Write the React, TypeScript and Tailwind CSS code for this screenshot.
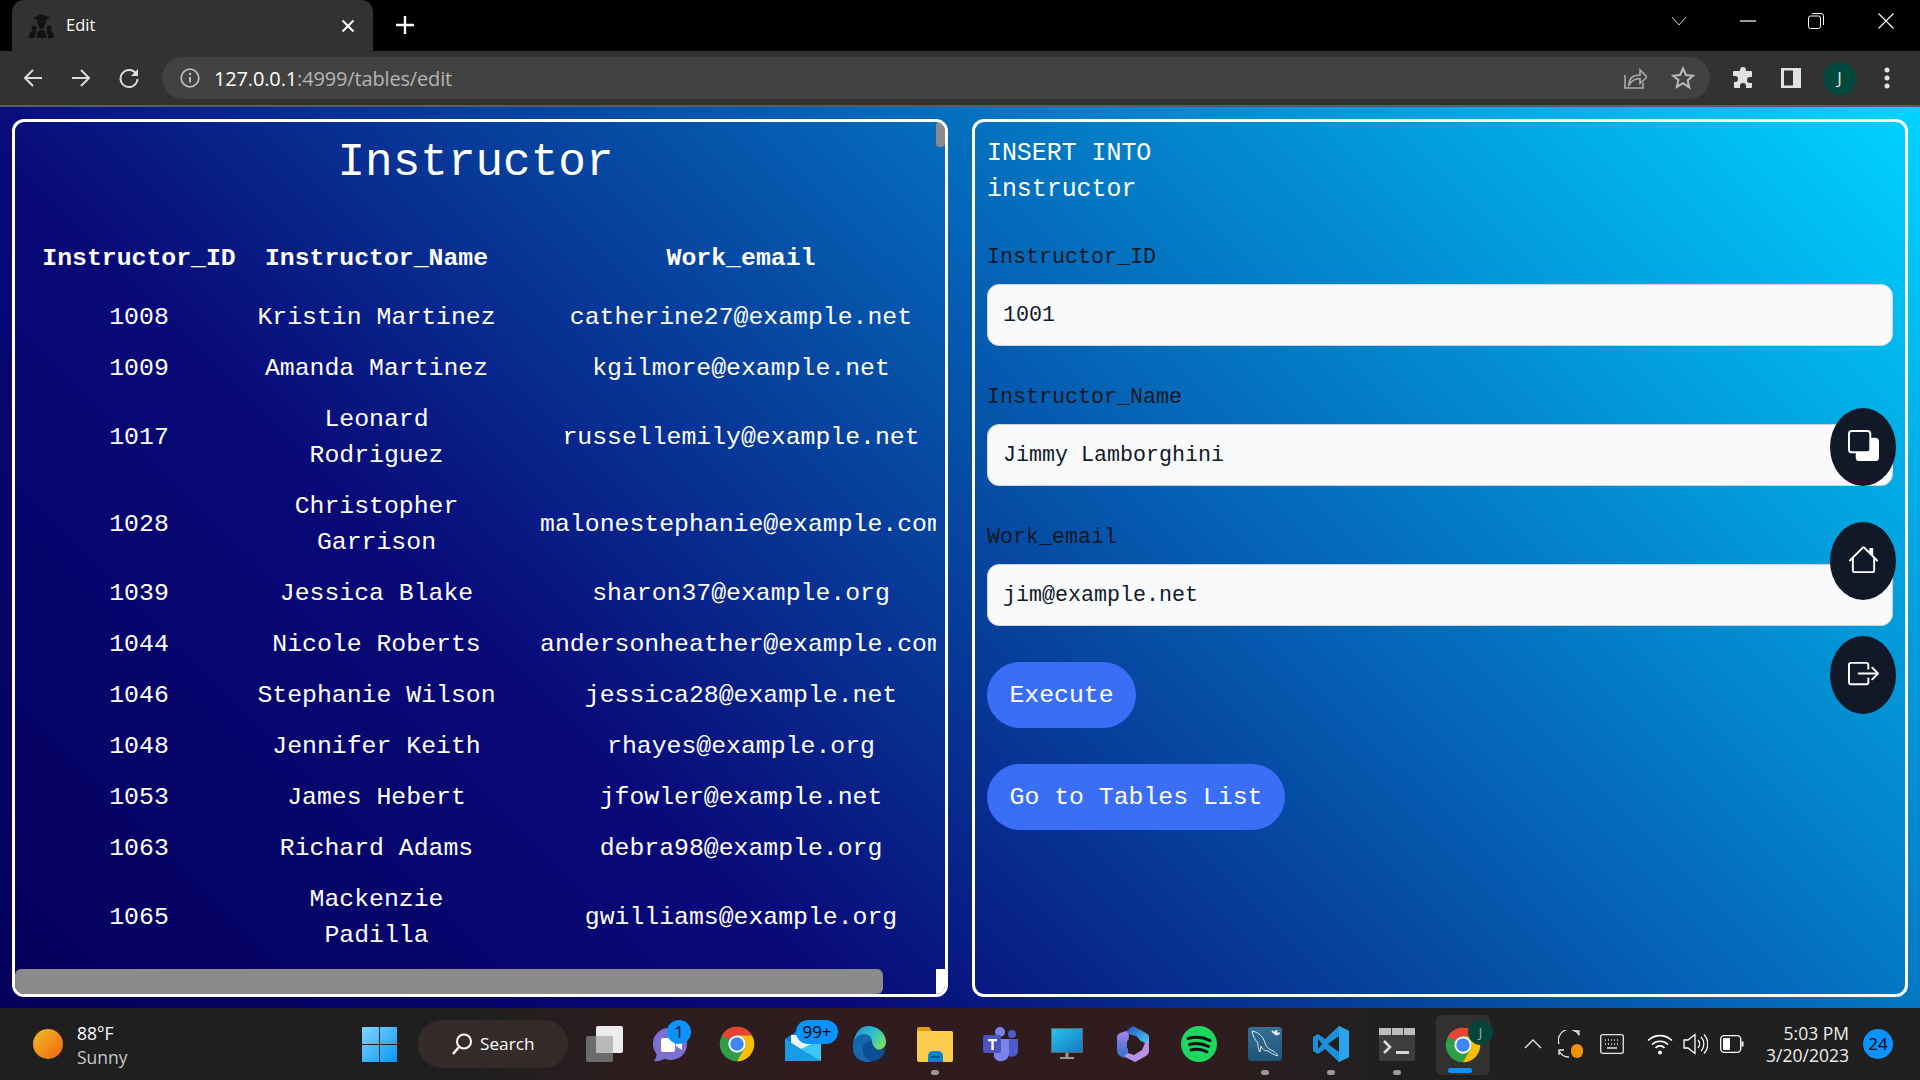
import React from "react";
import { BsBack, BsHouse, BsBoxArrowRight } from "react-icons/bs";

const rows: [string, string[], string][] = [
  ["1008", ["Kristin Martinez"], "catherine27@example.net"],
  ["1009", ["Amanda Martinez"], "kgilmore@example.net"],
  ["1017", ["Leonard", "Rodriguez"], "russellemily@example.net"],
  ["1028", ["Christopher", "Garrison"], "malonestephanie@example.com"],
  ["1039", ["Jessica Blake"], "sharon37@example.org"],
  ["1044", ["Nicole Roberts"], "andersonheather@example.com"],
  ["1046", ["Stephanie Wilson"], "jessica28@example.net"],
  ["1048", ["Jennifer Keith"], "rhayes@example.org"],
  ["1053", ["James Hebert"], "jfowler@example.net"],
  ["1063", ["Richard Adams"], "debra98@example.org"],
  ["1065", ["Mackenzie", "Padilla"], "gwilliams@example.org"],
];

const ui = "font-['Open_Sans','Noto_Sans',sans-serif]";

function ChromeLogo({ size = 36 }: { size?: number }) {
  return (
    <svg width={size} height={size} viewBox="0 0 48 48">
      <circle cx="24" cy="24" r="23" fill="#2e9e48" />
      <path d="M24 1a23 23 0 0 1 19.9 11.5H24a11.5 11.5 0 0 0-10 5.800L4.100 12.500A23 23 0 0 1 24 1z" fill="#ea4335" />
      <path d="M43.900 12.500A23 23 0 0 1 24 47l10-17.200a11.500 11.500 0 0 0 0-11.500L24 12.500z" fill="#fbbc04" />
      <circle cx="24" cy="24" r="11.500" fill="#fff" />
      <circle cx="24" cy="24" r="9" fill="#4285f4" />
    </svg>
  );
}

function Slot({ children, dot }: { children?: React.ReactNode; dot?: boolean }) {
  return (
    <div className="relative w-[66px] h-[72px] flex items-center justify-center shrink-0">
      {children}
      {dot && <div className="absolute left-[29px] bottom-[5px] w-[8px] h-[5px] rounded-full bg-[#9a9a9a]" />}
    </div>
  );
}

function Badge({ text, className }: { text: string; className: string }) {
  return (
    <div className={`absolute rounded-full bg-[#0a93ff] text-black flex items-center justify-center text-[17px] ${ui} ${className}`}>
      {text}
    </div>
  );
}

export default function App() {
  return (
    <div className="w-[1920px] h-[1080px] flex flex-col overflow-hidden bg-black">
      {/* Tab strip */}
      <div className={`h-[51px] shrink-0 bg-black flex items-end relative ${ui}`}>
        <div className="ml-[12px] w-[361px] h-[51px] bg-[#323232] rounded-t-[12px] flex items-center pl-[17px] pr-[18px] text-white">
          <svg width="25" height="25" viewBox="0 0 25 25" className="shrink-0">
            <path d="M12.500 1 21 5l-8.500 4L4 5z" fill="#111" />
            <path d="M8 7.500v2.500a4.500 2.500 0 0 0 9 0V7.500l-4.500 2z" fill="#111" />
            <circle cx="12.500" cy="13.500" r="2.600" fill="#111" />
            <circle cx="5" cy="15" r="2.500" fill="#111" />
            <circle cx="20" cy="15" r="2.500" fill="#111" />
            <path d="M0 25c0-5 2-7.500 5-7.500 1.500 0 2 .5 2.500 1-1 1.500-1.500 4-1.500 6.500zM7.500 25c0-5 2-8 5-8s5 3 5 8zM19 25c0-2.500-.5-5-1.500-6.500.5-.5 1-1 2.500-1 3 0 5 2.500 5 7.500z" fill="#111" />
          </svg>
          <span className="ml-[12px] text-[16.500px] text-white">Edit</span>
          <svg width="14" height="14" viewBox="0 0 14 14" className="ml-auto">
            <path d="M1.500 1.500l11 11M12.500 1.500l-11 11" stroke="#fff" strokeWidth="2" />
          </svg>
        </div>
        <svg width="20" height="20" viewBox="0 0 20 20" className="ml-[22px] mb-[16px]">
          <path d="M10 1v18M1 10h18" stroke="#fff" strokeWidth="2.400" />
        </svg>
        <div className="ml-auto flex items-center h-[51px] pb-[9px] mr-[26px]">
          <svg width="16" height="10" viewBox="0 0 16 10" className="mr-[53px]">
            <path d="M1 1l7 8 7-8" stroke="#ccc" fill="none" />
          </svg>
          <svg width="16" height="2" viewBox="0 0 16 2" className="mr-[52px]">
            <path d="M0 1h16" stroke="#fff" strokeWidth="1.200" />
          </svg>
          <svg width="16" height="16" viewBox="0 0 16 16" className="mr-[54px]">
            <rect x=".5" y="3" width="12" height="12.500" rx="2" stroke="#fff" fill="none" />
            <path d="M4 .6h9.500a2 2 0 0 1 2 2V12" stroke="#fff" fill="none" />
          </svg>
          <svg width="16" height="16" viewBox="0 0 16 16">
            <path d="M.5.5l15 15M15.500.5l-15 15" stroke="#fff" strokeWidth="1.100" />
          </svg>
        </div>
      </div>

      {/* Toolbar */}
      <div className={`h-[56px] shrink-0 bg-[#323232] border-b-2 border-[#5c5c5c] flex items-center ${ui}`}>
        <div className="flex items-center h-[54px] w-full">
          <svg width="22" height="22" viewBox="0 0 22 22" className="ml-[22px]">
            <path d="M20 11H3M11 3l-8 8 8 8" stroke="#ddd" strokeWidth="2" fill="none" />
          </svg>
          <svg width="22" height="22" viewBox="0 0 22 22" className="ml-[26px]">
            <path d="M2 11h17M11 3l8 8-8 8" stroke="#ddd" strokeWidth="2" fill="none" />
          </svg>
          <svg width="22" height="22" viewBox="0 0 22 22" className="ml-[26px]">
            <path d="M18.500 7.500A8.500 8.500 0 1 0 19.500 12" stroke="#ddd" strokeWidth="2" fill="none" />
            <path d="M20 2v7h-7z" fill="#ddd" />
          </svg>
          <div className="ml-[22px] w-[1548px] h-[42px] rounded-full bg-[#424242] flex items-center">
            <svg width="20" height="20" viewBox="0 0 20 20" className="ml-[18px]">
              <circle cx="10" cy="10" r="8.800" stroke="#bbb" strokeWidth="1.800" fill="none" />
              <path d="M10 9v5.500" stroke="#bbb" strokeWidth="2" />
              <circle cx="10" cy="6" r="1.200" fill="#bbb" />
            </svg>
            <span className="ml-[14px] pt-[1px] text-[20px] tracking-[-0.15px] text-white">
              127.0.0.1<span className="text-[#b4b4b4]">:4999/tables/edit</span>
            </span>
            <svg width="24" height="24" viewBox="0 0 24 24" className="ml-auto">
              <path d="M2 9v13h18v-5" stroke="#aaa" strokeWidth="1.600" fill="none" />
              <path d="M6 19c0-7 4-10 11-10V4l7 7-7 6.500v-5c-5 0-8 1.500-11 6.500z" stroke="#aaa" strokeWidth="1.600" fill="none" />
            </svg>
            <svg width="24" height="24" viewBox="0 0 24 24" className="ml-[24px] mr-[15px]">
              <path d="M12 2.500l2.900 6.500 7 .7-5.300 4.700 1.600 7L12 17.200l-6.200 3.700 1.600-7L2.100 9.700l7-.7z" stroke="#bbb" strokeWidth="2" fill="none" />
            </svg>
          </div>
          <svg width="22" height="22" viewBox="0 0 22 22" className="ml-[22px]">
            <path d="M8 3a3 3 0 0 1 6 0v1h5a1 1 0 0 1 1 1v5h-2a3 3 0 0 0 0 6h2v4a1 1 0 0 1-1 1h-5v-2a3 3 0 0 0-6 0v2H3a1 1 0 0 1-1-1v-5h1a3 3 0 0 0 0-6H1V5a1 1 0 0 1 1-1h6z" fill="#e2e2e2" />
          </svg>
          <svg width="22" height="22" viewBox="0 0 22 22" className="ml-[26px]">
            <rect x="1" y="1" width="20" height="20" fill="#e2e2e2" />
            <rect x="4" y="3.500" width="9" height="15" fill="#323232" />
          </svg>
          <div className="ml-[21px] w-[33px] h-[33px] rounded-full bg-[#00493c] text-[#e6e6e6] text-[17px] flex items-center justify-center">J</div>
          <svg width="6" height="22" viewBox="0 0 6 22" className="ml-[28px]">
            <circle cx="3" cy="3" r="2.500" fill="#e2e2e2" />
            <circle cx="3" cy="11" r="2.500" fill="#e2e2e2" />
            <circle cx="3" cy="19" r="2.500" fill="#e2e2e2" />
          </svg>
        </div>
      </div>

      {/* Page */}
      <div className="relative flex-1 min-h-0 flex gap-[24px] pt-[12px] pb-[11px] pl-[12px] pr-[12px] font-['Liberation_Mono',monospace] bg-[linear-gradient(45deg,#04005a_0%,#090979_30%,#00d4ff_100%)]">
        {/* Left panel */}
        <div className="relative w-[936px] border-[3px] border-white rounded-[12px] overflow-hidden text-white">
          <div className="h-[847px] w-[921px] overflow-hidden">
            <h1 className="text-center text-[46px] leading-[56px] pt-[13px] font-normal">Instructor</h1>
            <table className="mt-[41px] ml-[13px] w-[951px] table-fixed border-collapse text-[24.8px] leading-[36px] text-center">
              <colgroup>
                <col className="w-[222px]" />
                <col className="w-[253px]" />
                <col className="w-[476px]" />
              </colgroup>
              <thead>
                <tr className="h-[59px]">
                  <th className="font-bold pb-[8px]">Instructor_ID</th>
                  <th className="font-bold pb-[8px]">Instructor_Name</th>
                  <th className="font-bold pb-[8px]">Work_email</th>
                </tr>
              </thead>
              <tbody>
                {rows.map(([id, name, email]) => (
                  <tr key={id}>
                    <td className="py-[7.5px]">{id}</td>
                    <td className="py-[7.5px] px-[6px]">
                      {name.map((n) => (
                        <div key={n}>{n}</div>
                      ))}
                    </td>
                    <td className="py-[7.5px] whitespace-nowrap">{email}</td>
                  </tr>
                ))}
              </tbody>
            </table>
          </div>
          <div className="absolute right-0 top-0 w-[9px] h-[25px] bg-[#8a8a8a] rounded-[4px]" />
          <div className="absolute left-0 bottom-0 w-[868px] h-[25px] bg-[#8a8a8a] rounded-[6px]" />
          <div className="absolute right-0 bottom-0 w-[9px] h-[25px] bg-white" />
        </div>

        {/* Right panel */}
        <div className="w-[936px] border-[3px] border-white rounded-[12px] pl-[12px] pr-[12px] pt-[13px] flex flex-col items-start">
          <div className="text-white text-[24.9px] leading-[36px]">
            <div>INSERT INTO</div>
            <div>instructor</div>
          </div>
          {[
            ["Instructor_ID", "1001"],
            ["Instructor_Name", "Jimmy Lamborghini"],
            ["Work_email", "jim@example.net"],
          ].map(([label, value], i) => (
            <div key={label} className={`w-full ${i === 0 ? "mt-[38px]" : "mt-[39px]"}`}>
              <div className="text-[21.67px] leading-[26px] text-[#111827]">{label}</div>
              <input
                readOnly
                value={value}
                className="mt-[13px] block w-[906px] h-[62px] rounded-[12px] bg-[#f9fafb] border border-[#d1d5db] px-[15px] text-[21.67px] text-[#111827] outline-none"
              />
            </div>
          ))}
          <button className="mt-[36px] h-[66px] w-[149px] pt-[1px] rounded-full bg-[#3b6ef6] text-white text-[24.8px] leading-none">Execute</button>
          <button className="mt-[36px] h-[66px] w-[298px] pt-[1px] rounded-full bg-[#3b6ef6] text-white text-[24.8px] leading-none">Go to Tables List</button>
        </div>

        {/* Floating buttons */}
        <div className="absolute left-[1830px] top-[301px] flex flex-col gap-[36px]">
          {[BsBack, BsHouse, BsBoxArrowRight].map((Icon, i) => (
            <div key={i} className="w-[66px] h-[78px] pb-[3px] rounded-[50%] bg-[#111827] flex items-center justify-center text-white">
              <Icon size={31} />
            </div>
          ))}
        </div>
      </div>

      {/* Taskbar */}
      <div className={`h-[72px] shrink-0 flex items-center relative text-white ${ui} bg-[linear-gradient(90deg,#1f1f1f_0%,#1f1f1f_24%,#2f1c1e_35%,#301c1e_62%,#202020_72%,#1f1f1f_100%)]`}>
        <div className="ml-[33px] w-[30px] h-[30px] rounded-full bg-[linear-gradient(135deg,#f0bb2c,#f0640a)] shrink-0" />
        <div className="ml-[14px] w-[80px] pt-[1px] text-[17.500px] leading-[24px] shrink-0">
          <div className="text-white">88°F</div>
          <div className="text-[#c8c8c8]">Sunny</div>
        </div>
        <div className="ml-[205px] shrink-0">
          <svg width="35" height="35" viewBox="0 0 35 35">
            <defs>
              <linearGradient id="w" x1="0" y1="0" x2="1" y2="1">
                <stop offset="0" stopColor="#7fd6ff" />
                <stop offset="1" stopColor="#0b94f5" />
              </linearGradient>
            </defs>
            <path d="M0 1a1 1 0 0 1 1-1h16v17H0zM18 0h16a1 1 0 0 1 1 1v16H18zM0 18h17v17H1a1 1 0 0 1-1-1zM18 18h17v16a1 1 0 0 1-1 1H18z" fill="url(#w)" />
          </svg>
        </div>
        <div className="ml-[21px] w-[150px] h-[48px] rounded-full bg-[#362b2b] flex items-center pl-[33px] shrink-0">
          <svg width="22" height="24" viewBox="0 0 22 24">
            <circle cx="13" cy="9.500" r="7" stroke="#fff" strokeWidth="2" fill="none" />
            <path d="M8 15l-6 7" stroke="#fff" strokeWidth="2.400" />
          </svg>
          <span className="ml-[7px] text-[17.200px] text-white">Search</span>
        </div>
        <div className="flex ml-[4px]">
          <Slot>
            <svg width="38" height="36" viewBox="0 0 38 36">
              <rect x="0" y="10" width="27" height="26" rx="2" fill="#6b6b6b" />
              <rect x="10" y="0" width="27" height="27" rx="2" fill="#ececec" />
              <rect x="10" y="10" width="17" height="17" fill="#b9b9b9" />
            </svg>
          </Slot>
          <Slot>
            <svg width="36" height="36" viewBox="0 0 36 36">
              <path d="M18 2a16 16 0 1 1-6 30.800C8 35 4 35.500 1 35c2-2 2.500-5 2.500-7A16 16 0 0 1 18 2z" fill="#7b6fd0" />
              <rect x="8" y="12" width="14" height="14" rx="2" fill="#fff" />
              <path d="M23 18l6-4v10l-6-4z" fill="#fff" />
            </svg>
            <Badge text="1" className="left-[29px] top-[12px] w-[24px] h-[24px]" />
          </Slot>
          <Slot>
            <ChromeLogo />
          </Slot>
          <Slot>
            <svg width="36" height="34" viewBox="0 0 36 34">
              <path d="M0 12L18 0l18 12v22H0z" fill="#0f7fd6" />
              <path d="M6 8h24v14l-12 6-12-6z" fill="#eef3f6" />
              <path d="M0 12l36 22H0z" fill="#1a9be6" />
              <path d="M36 12v22L16 22z" fill="#3ec6f2" />
            </svg>
            <Badge text="99+" className="left-[26px] top-[12px] w-[42px] h-[24px]" />
          </Slot>
          <Slot>
            <svg width="36" height="36" viewBox="0 0 36 36" className="-ml-[2px]">
              <defs>
                <linearGradient id="e" x1="0" y1="0" x2="1" y2=".6">
                  <stop offset="0" stopColor="#1a8fd8" />
                  <stop offset=".6" stopColor="#30c0c8" />
                  <stop offset="1" stopColor="#6fe06a" />
                </linearGradient>
              </defs>
              <path d="M18 0c10 0 18 7 18 16 0 5-4 8-8 8-4.500 0-7-2-7-4 0-1 1-1.500 1-3 0-3-3-6-7-6-6 0-11 5-12 9C4 9 9 0 18 0z" fill="url(#e)" />
              <path d="M3 20c0-7 5-12 11-12 4 0 8 3 8 7-5 0-9 4-9 9 0 5 4 10 10 11-1 .500-3 1-5 1C8 36 2 29 3 20z" fill="#1668ae" />
              <path d="M13 24c0-5 4-9 9-9 0 4 3 9 9 9 2 0 4-1 5-2-2 8-7 13-13 13-6-1-10-6-10-11z" fill="#0c4f96" />
            </svg>
          </Slot>
          <Slot dot>
            <svg width="36" height="36" viewBox="0 0 36 36">
              <path d="M0 3a2 2 0 0 1 2-2h10l3 4h-15z" fill="#d99d0d" />
              <path d="M0 5h34a2 2 0 0 1 2 2v27a2 2 0 0 1-2 2H2a2 2 0 0 1-2-2z" fill="#fbcd4e" />
              <path d="M11 30a5 5 0 0 1 5-5h5a5 5 0 0 1 5 5v6H11z" fill="#0e7fd2" />
              <rect x="14" y="30" width="9" height="2" fill="#0a4f93" />
            </svg>
          </Slot>
          <Slot>
            <svg width="36" height="36" viewBox="0 0 36 36">
              <circle cx="17" cy="6" r="5" fill="#7b83eb" />
              <circle cx="29" cy="8" r="4" fill="#5059c9" />
              <path d="M24 13h11v12a6 6 0 0 1-11 3z" fill="#5059c9" />
              <path d="M11 13h15v15a8 8 0 0 1-15 3z" fill="#7b83eb" />
              <rect x="0" y="9" width="18" height="18" rx="2" fill="#4b53bc" />
              <path d="M5 13h9v2.200h-3.300V24H8.300v-8.800H5z" fill="#fff" />
            </svg>
          </Slot>
          <Slot>
            <svg width="32" height="36" viewBox="0 0 32 36">
              <defs>
                <linearGradient id="m" x1="0" y1="0" x2="1" y2="1">
                  <stop offset="0" stopColor="#29c3e8" />
                  <stop offset="1" stopColor="#1578c8" />
                </linearGradient>
              </defs>
              <rect x="0" y="2" width="32" height="25" fill="#666" />
              <rect x="1" y="3" width="30" height="23" fill="url(#m)" />
              <rect x="14.500" y="27" width="3" height="5" fill="#9a9a9a" />
              <rect x="9" y="31" width="14" height="2" fill="#9a9a9a" />
            </svg>
          </Slot>
          <Slot>
            <svg width="32" height="36" viewBox="0 0 32 36">
              <defs>
                <linearGradient id="b1" x1="0" y1="0" x2="1" y2="1">
                  <stop offset="0" stopColor="#1f56c4" />
                  <stop offset="1" stopColor="#4fcdf5" />
                </linearGradient>
                <linearGradient id="b2" x1="0" y1="0" x2="0" y2="1">
                  <stop offset="0" stopColor="#a884e8" />
                  <stop offset="1" stopColor="#2f6fd0" />
                </linearGradient>
              </defs>
              <path d="M16 0l12 6.500a8 8 0 0 1 4 3.500v9l-9-4.500-3-4L12 8 9 5z" fill="url(#b1)" />
              <path d="M9 5l3 3-1 14v8l-4 2-4-2a6 6 0 0 1-3-5V10a6 6 0 0 1 3-3z" fill="url(#b2)" />
              <path d="M32 15v11a6 6 0 0 1-3 4l-11 6-8-4-3-2 4-3 6 2 8-5 3-7z" fill="#b98fe8" />
              <path d="M16 11l7 4v7l-7 4-6-4v-7z" fill="#2c1c1e" />
            </svg>
          </Slot>
          <Slot>
            <svg width="36" height="36" viewBox="0 0 36 36">
              <circle cx="18" cy="18" r="18" fill="#1ed760" />
              <path d="M7 12.500c7-2 15-1.500 22 2M8.500 18.500c6-1.700 13-1 19 2M10 24c5-1.300 11-.8 16 1.800" stroke="#111" strokeWidth="3" strokeLinecap="round" fill="none" />
            </svg>
          </Slot>
          <Slot dot>
            <svg width="34" height="34" viewBox="0 0 34 34">
              <defs>
                <linearGradient id="s" x1="0" y1="0" x2="0" y2="1">
                  <stop offset="0" stopColor="#356f98" />
                  <stop offset="1" stopColor="#1f5478" />
                </linearGradient>
              </defs>
              <rect x="0" y="0" width="34" height="34" rx="3" fill="url(#s)" />
              <path d="M4 4c6 1 11 5 13 12 1 4 4 6 6 7 3 1 5 3 7 6-4-1-7-3-10-5-4 0-6-2-7-5l-1 6c-2-3-2-6-2-9-3-3-5-7-6-12z" fill="none" stroke="#dfe8ee" strokeWidth="1" />
              <path d="M24 4l5 4" stroke="#eeeeee" strokeWidth="2.200" />
              <path d="M29 8a2.500 2.500 0 0 0 3-3l-1.500 1-1.500-1 .5-2a2.500 2.500 0 0 0-3 3z" fill="#eeeeee" />
            </svg>
          </Slot>
          <Slot dot>
            <svg width="36" height="36" viewBox="0 0 36 36">
              <path d="M26 0l10 5v26l-10 5-14-13-7 5-5-3V11l5-3 7 5z" fill="#1c8fd8" />
              <path d="M26 0l10 5v26l-10 5z" fill="#2aa4ec" />
              <path d="M26 10L15 18l11 8z" fill="#1f1f1f" />
              <path d="M5 13v10l4-5z" fill="#1f1f1f" />
            </svg>
          </Slot>
          <Slot dot>
            <svg width="36" height="33" viewBox="0 0 36 33">
              <rect x="0" y="0" width="36" height="33" rx="2" fill="#3d3d3d" />
              <rect x="0" y="0" width="36" height="7" fill="#bdbdbd" />
              <rect x="12" y="0" width="1" height="7" fill="#3d3d3d" />
              <rect x="24" y="0" width="1" height="7" fill="#3d3d3d" />
              <path d="M5 13l6 6-6 6" stroke="#d8d8d8" strokeWidth="2.600" fill="none" />
              <rect x="17" y="23" width="13" height="3" fill="#d8d8d8" />
            </svg>
          </Slot>
          <Slot>
            <div className="absolute left-[54px] top-[7px] w-[6px] h-[60px] rounded-r-[6px] bg-[#2a2a2a]" />
            <div className="absolute left-[6px] top-[7px] w-[54px] h-[60px] rounded-[6px] bg-[#333030]" />
            <div className="relative -ml-[1px] mt-[2px]">
              <ChromeLogo />
            </div>
            <div className="absolute left-[38px] top-[12px] w-[25px] h-[25px] rounded-full bg-[#06443a] text-[#9fb5ad] text-[13px] flex items-center justify-center">J</div>
            <div className="absolute left-[18px] bottom-[7px] w-[24px] h-[5px] rounded-full bg-[#0a93ff]" />
          </Slot>
        </div>
        <div className="ml-[28px] flex items-center shrink-0">
          <svg width="18" height="10" viewBox="0 0 18 10">
            <path d="M1 9l8-8 8 8" stroke="#e6e6e6" strokeWidth="1.300" fill="none" />
          </svg>
          <div className="relative ml-[16px] w-[24px] h-[28px]">
            <svg width="24" height="28" viewBox="0 0 24 28">
              <path d="M1 14A11 11 0 0 1 21 5M16 1h5v4.500M1 21a11 11 0 0 0 10 6M1 25v-5h5" stroke="#e6e6e6" strokeWidth="1.300" fill="none" />
            </svg>
            <div className="absolute right-[-1px] bottom-[0px] w-[12px] h-[14px] rounded-full bg-[#f39200]" />
          </div>
          <svg width="24" height="20" viewBox="0 0 24 20" className="ml-[18px]">
            <rect x=".7" y=".7" width="22.600" height="18.600" rx="2" stroke="#e6e6e6" strokeWidth="1.300" fill="none" />
            <path d="M5 6h1M8 6h1M11 6h1M14 6h1M17 6h1M5 10h1M8 10h1M11 10h1M14 10h1M17 10h1M7 14h10" stroke="#e6e6e6" strokeWidth="1.300" />
          </svg>
          <svg width="26" height="22" viewBox="0 0 26 22" className="ml-[23px]">
            <path d="M1 7.500a17 17 0 0 1 24 0M5 11.500a11.500 11.500 0 0 1 16 0M8.500 15a6 6 0 0 1 9 0" stroke="#fff" strokeWidth="1.700" fill="none" />
            <circle cx="13" cy="19.500" r="2" fill="#fff" />
          </svg>
          <svg width="25" height="22" viewBox="0 0 25 22" className="ml-[10px]">
            <path d="M1 7h4l7-5.500v19L5 15H1z" stroke="#fff" strokeWidth="1.300" fill="none" />
            <path d="M15 7a6 6 0 0 1 0 8M18 4a10 10 0 0 1 0 14M21 1.500a14 14 0 0 1 0 19" stroke="#fff" strokeWidth="1.300" fill="none" />
          </svg>
          <svg width="24" height="18" viewBox="0 0 24 18" className="ml-[12px]">
            <rect x=".7" y=".7" width="20" height="16.600" rx="3.500" stroke="#fff" strokeWidth="1.300" fill="none" />
            <rect x="3" y="3" width="7" height="12" rx="1" fill="#fff" />
            <rect x="21.500" y="6.500" width="2" height="5" fill="#fff" />
          </svg>
        </div>
        <div className="ml-[3px] w-[102px] text-right text-[17.500px] leading-[22px] text-[#ececec] shrink-0">
          <div>5:03 PM</div>
          <div>3/20/2023</div>
        </div>
        <div className="ml-[14px] w-[30px] h-[30px] rounded-full bg-[#0a93ff] text-black text-[17px] flex items-center justify-center shrink-0">24</div>
      </div>
    </div>
  );
}
